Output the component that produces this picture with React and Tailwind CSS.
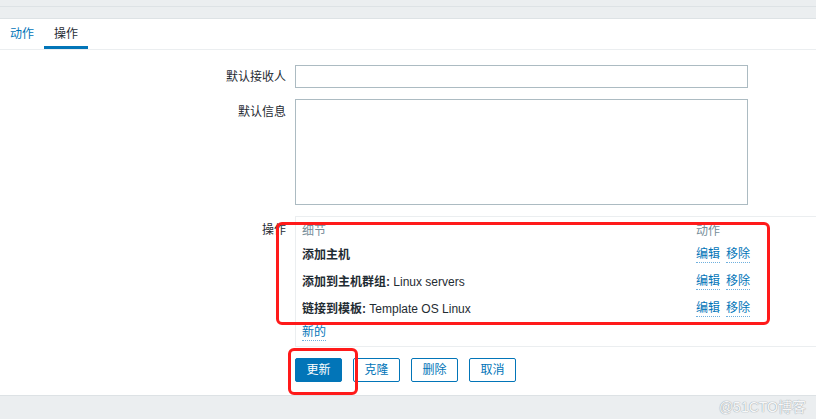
import React from "react";

const operations = [
  { name: "添加主机", value: "" },
  { name: "添加到主机群组:", value: "Linux servers" },
  { name: "链接到模板:", value: "Template OS Linux" },
];

function FormRow({ label, children, labelPad = "pt-[5px]" }) {
  return (
    <div className="flex items-start">
      <div className={`w-[286px] shrink-0 text-right text-[#1f2c33] ${labelPad}`}>{label}</div>
      <div className="ml-[9px] flex-1">{children}</div>
    </div>
  );
}

function LinkText({ children }) {
  return (
    <span className="text-[#0275b8] border-b border-dotted border-[#6fb0de] leading-[15px]">
      {children}
    </span>
  );
}

export default function App() {
  return (
    <div
      className="relative h-[419px] w-full overflow-hidden bg-white text-[12px]"
      style={{ fontFamily: '"Liberation Sans", "Noto Sans CJK SC", sans-serif' }}
    >
      {/* top band */}
      <div className="h-[19px] bg-[#ebeef0] border-b border-[#dde2e5] flex flex-col">
        <div className="h-[7px] border-b border-[#dde2e5]"></div>
      </div>

      {/* tabs */}
      <div className="flex h-[31px] border-b border-[#ebeef0]">
        <div className="px-[10px] flex items-center text-[#0275b8]">动作</div>
        <div className="px-[10px] flex items-center text-[#1f2c33] border-b-[3px] border-[#0275b8] pt-[3px]">
          操作
        </div>
      </div>

      {/* form */}
      <div className="pt-[15px] flex flex-col gap-[11px] h-[345px]">
        <FormRow label="默认接收人" labelPad="pt-[3px]">
          <input className="w-[453px] h-[23px] border border-[#acbbc2] outline-none px-1" />
        </FormRow>
        <FormRow label="默认信息" labelPad="pt-[4px]">
          <textarea className="block w-[453px] h-[106px] border border-[#acbbc2] outline-none resize-none" />
        </FormRow>
        <FormRow label="操作" labelPad="pt-[5px]">
          <div className="border-t border-l border-b border-[#ebeef0]">
            <div className="flex h-[24px] items-center pt-[3px] text-[#768d99]">
              <div className="flex-1 pl-[6px]">细节</div>
              <div className="w-[120px]">动作</div>
            </div>
            {operations.map((op) => (
              <div key={op.name} className="flex h-[27px] items-center text-[#1f2c33]">
                <div className="flex-1 pl-[6px]">
                  <span className="font-bold">{op.name}</span>
                  {op.value && <span> {op.value}</span>}
                </div>
                <div className="w-[120px] flex gap-[6px]">
                  <LinkText>编辑</LinkText>
                  <LinkText>移除</LinkText>
                </div>
              </div>
            ))}
            <div className="flex h-[24px] items-center pl-[6px] pb-[2px]">
              <LinkText>新的</LinkText>
            </div>
          </div>
        </FormRow>
        <div className="flex pl-[295px] gap-[11px]">
          <button className="w-[47px] h-[24px] bg-[#0275b8] text-white rounded-[2px] border border-[#0275b8]">
            更新
          </button>
          <button className="w-[47px] h-[24px] bg-white text-[#0275b8] rounded-[2px] border border-[#0275b8]">
            克隆
          </button>
          <button className="w-[47px] h-[24px] bg-white text-[#0275b8] rounded-[2px] border border-[#0275b8]">
            删除
          </button>
          <button className="w-[47px] h-[24px] bg-white text-[#0275b8] rounded-[2px] border border-[#0275b8]">
            取消
          </button>
        </div>
      </div>

      {/* bottom band */}
      <div className="absolute left-0 right-0 bottom-0 h-[24px] bg-[#ebeef0] border-t border-[#dde2e5] flex items-center justify-end pr-[10px]">
        <span className="text-[14px] text-[#f7f8f9] [text-shadow:0_0_1px_#9aa3a9,0_0_1px_#9aa3a9]">@51CTO博客</span>
      </div>

      {/* red annotations */}
      <div className="absolute left-[276px] top-[222px] w-[494px] h-[103px] border-[3px] border-[#ff1a1a] rounded-[6px]"></div>
      <div className="absolute left-[288px] top-[348px] w-[70px] h-[47px] border-[3px] border-[#ff1a1a] rounded-[6px]"></div>
    </div>
  );
}
